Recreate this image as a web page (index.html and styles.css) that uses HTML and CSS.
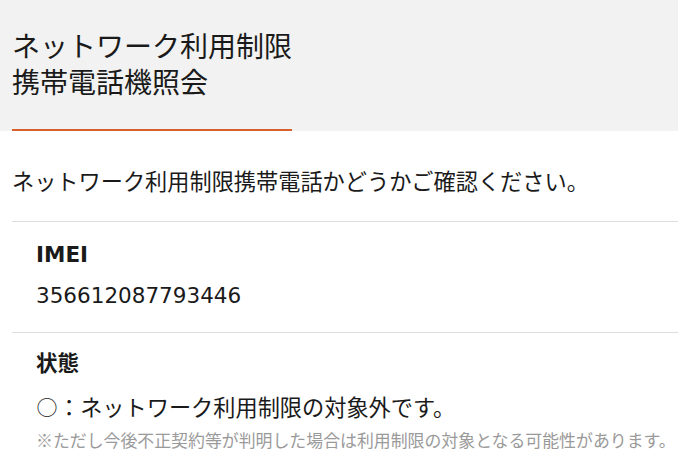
FILE: index.html
```html
<!DOCTYPE html>
<html lang="ja">
<head>
<meta charset="utf-8">
<title>ネットワーク利用制限携帯電話機照会</title>
<link rel="stylesheet" href="styles.css">
</head>
<body>
<header class="header">
  <h1 class="title"><span class="title-line">ネットワーク利用制限</span><span class="title-line">携帯電話機照会</span></h1>
  <div class="accent"></div>
</header>
<main class="content">
  <p class="intro">ネットワーク利用制限携帯電話かどうかご確認ください。</p>
  <section class="item">
    <h2 class="label">IMEI</h2>
    <p class="value">356612087793446</p>
  </section>
  <section class="item">
    <h2 class="label">状態</h2>
    <p class="value status"><span class="mark">○</span>：ネットワーク利用制限の対象外です。</p>
    <p class="note">※ただし今後不正契約等が判明した場合は利用制限の対象となる可能性があります。</p>
  </section>
</main>
</body>
</html>
```
FILE: styles.css
```css
html, body {
  margin: 0;
  padding: 0;
  background: #ffffff;
}
body {
  font-family: "DejaVu Sans", "Noto Sans CJK JP", sans-serif;
  color: #1a1a1a;
}
.header {
  background: #f2f2f2;
  padding: 27px 0 0 12px;
}
.title {
  margin: 0;
  font-family: "Noto Sans CJK JP", sans-serif;
  font-weight: 400;
  font-size: 28px;
  line-height: 36px;
  color: #1a1a1a;
}
.title-line {
  display: block;
  height: 36px;
}
.accent {
  margin-top: 30px;
  width: 280px;
  height: 2px;
  background: #d6612c;
}
.content {
  margin-left: 12px;
}
.intro {
  margin: 0;
  padding: 33px 0 25px;
  font-family: "Noto Sans CJK JP", sans-serif;
  font-size: 22.2px;
  line-height: 32px;
  border-bottom: 1px solid #dddddd;
}
.item {
  padding: 18px 0 21px 24px;
  border-bottom: 1px solid #dddddd;
}
.item:last-child {
  border-bottom: none;
  padding-top: 16px;
}
.label {
  margin: 0;
  font-size: 21.5px;
  font-weight: 700;
  line-height: 30px;
}
.value {
  margin: 11px 0 0;
  font-size: 21.5px;
  line-height: 30px;
}
.status {
  font-family: "Noto Sans CJK JP", sans-serif;
  font-size: 22.2px;
  line-height: 32px;
}
.mark {
  display: inline-block;
  width: 22px;
  font-size: 21px;
  line-height: 32px;
  text-align: center;
  vertical-align: top;
}
.note {
  margin: 6px 0 0;
  font-family: "Noto Sans CJK JP", sans-serif;
  font-size: 16.9px;
  line-height: 24px;
  color: #9a9a9a;
  white-space: nowrap;
}
```
